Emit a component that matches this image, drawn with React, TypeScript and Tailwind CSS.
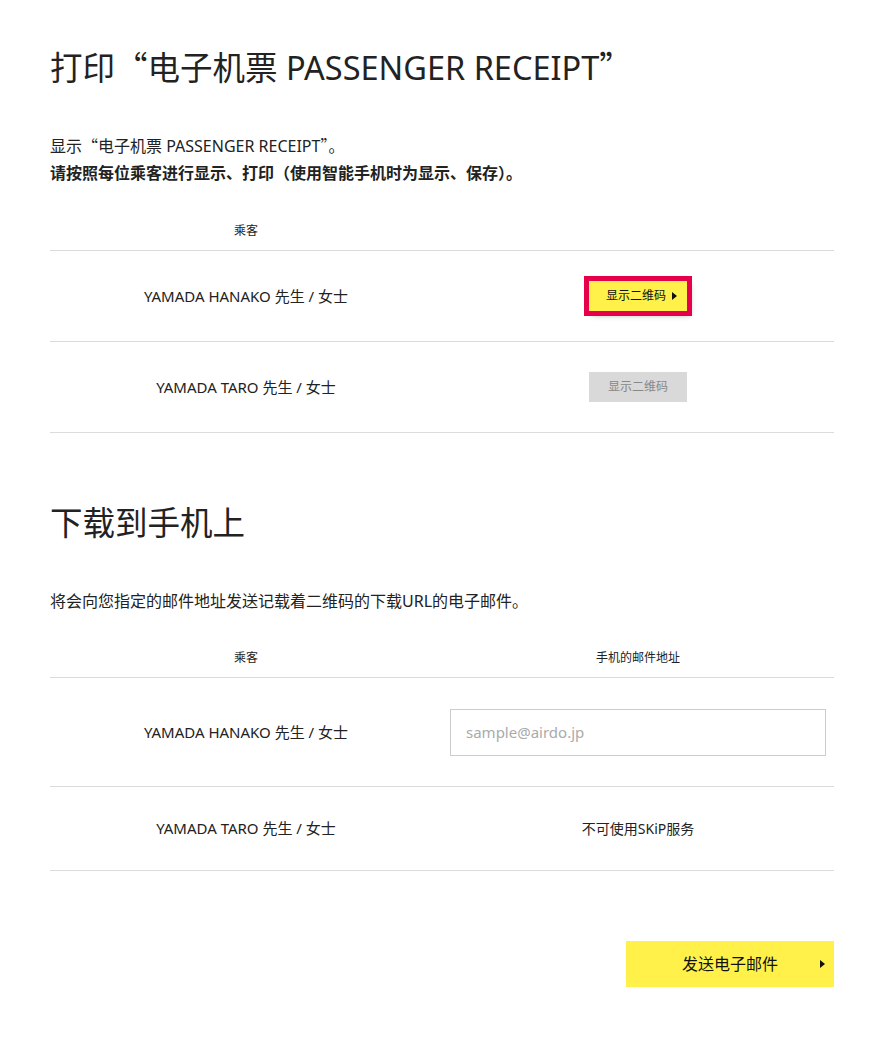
import { ReactNode } from 'react';

const font = { fontFamily: '"Noto Sans", "Noto Sans CJK SC", sans-serif' };
const cjk = { fontFamily: '"Noto Sans CJK SC", sans-serif' };

const Q = ({ children }: { children: ReactNode }) => <span style={cjk}>{children}</span>;

const Arrow = () => (
  <svg width="5" height="8" viewBox="0 0 5 8" className="shrink-0">
    <path d="M0 0 L5 4 L0 8 Z" fill="#111" />
  </svg>
);

const Row = ({
  left,
  right,
  className = 'h-[91px]',
  rightClass = 'justify-center',
}: {
  left: ReactNode;
  right: ReactNode;
  className?: string;
  rightClass?: string;
}) => (
  <div className={`grid grid-cols-2 items-center border-b border-[#dcdcdc] ${className}`}>
    <div className="text-center text-[15px] text-[#222]">{left}</div>
    <div className={`flex ${rightClass}`}>{right}</div>
  </div>
);

export default function App() {
  return (
    <div className="bg-white w-[884px] min-h-[1040px] px-[50px] pt-[42px] text-[#222]" style={font}>
      <h1 className="text-[32.5px] leading-[48px]">
        打印<Q>“</Q>电子机票 PASSENGER RECEIPT<Q>”</Q>
      </h1>
      <div className="mt-[40px] text-[16px] leading-[27px]">
        <p>
          显示<Q>“</Q>电子机票 PASSENGER RECEIPT<Q>”</Q>。
        </p>
        <p className="font-bold">请按照每位乘客进行显示、打印（使用智能手机时为显示、保存）。</p>
      </div>

      <div className="mt-[24px]">
        <div className="grid grid-cols-2 h-[40px] items-center border-b border-[#dcdcdc] text-[12px]">
          <div className="text-center">乘客</div>
          <div />
        </div>
        <Row
          left="YAMADA HANAKO 先生 / 女士"
          right={
            <button className="w-[98px] h-[30px] bg-[#fff14a] outline-[5px] outline-solid outline-[#e6004c] shadow-[3px_4px_6px_rgba(0,0,0,0.3)] flex items-center justify-end gap-[6px] pr-[10px] text-[12px] text-[#111]">
              <span>显示二维码</span>
              <Arrow />
            </button>
          }
        />
        <Row
          left="YAMADA TARO 先生 / 女士"
          right={
            <div className="w-[98px] h-[30px] bg-[#d9d9d9] flex items-center justify-center text-[12px] text-[#888]">
              显示二维码
            </div>
          }
        />
      </div>

      <h2 className="mt-[66px] text-[32.5px] leading-[48px]">下载到手机上</h2>
      <p className="mt-[42px] text-[16px] leading-[24px]">将会向您指定的邮件地址发送记载着二维码的下载URL的电子邮件。</p>

      <div className="mt-[25px]">
        <div className="grid grid-cols-2 h-[40px] items-center border-b border-[#dcdcdc] text-[12px]">
          <div className="text-center">乘客</div>
          <div className="text-center">手机的邮件地址</div>
        </div>
        <Row
          className="h-[109px]"
          rightClass="justify-start"
          left="YAMADA HANAKO 先生 / 女士"
          right={
            <input
              placeholder="sample@airdo.jp"
              className="ml-[8px] w-[376px] h-[47px] border border-[#cccccc] px-[15px] text-[15px] placeholder:text-[#aaa] outline-none"
              style={font}
            />
          }
        />
        <Row
          className="h-[84px]"
          left="YAMADA TARO 先生 / 女士"
          right={<span className="text-[14px] text-[#222]">不可使用SKiP服务</span>}
        />
      </div>

      <div className="flex justify-end mt-[70px]">
        <button className="relative w-[208px] h-[46px] bg-[#fff14a] flex items-center justify-center text-[16px] text-[#111]">
          <span>发送电子邮件</span>
          <span className="absolute right-[9px] top-1/2 -translate-y-1/2 flex">
            <Arrow />
          </span>
        </button>
      </div>
    </div>
  );
}
